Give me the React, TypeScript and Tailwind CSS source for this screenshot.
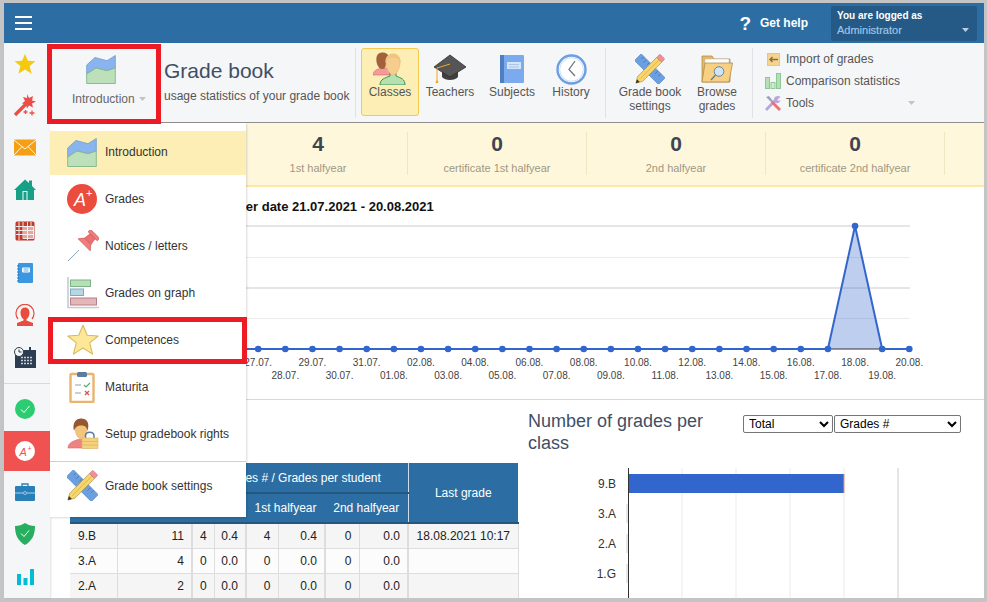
import React from "react";

const Star = ({ s, f, st }: { s: number; f: string; st?: string }) => (
  <svg width={s} height={s} viewBox="0 0 24 24">
    <polygon points="12,1 15.2,8.4 23.4,9 17,14.2 19.2,22.6 12,18 4.8,22.6 7,14.2 0.6,9 8.8,8.4" fill={f} stroke={st || "none"} strokeWidth={st ? 0.8 : 0} strokeLinejoin="round" />
  </svg>
);
const AreaIcon = () => (
  <svg width="30" height="30" viewBox="0 0 30 30">
    <path d="M0.7 19V10L9 2.5L21 5.7L29.3 .5V13L21 15.7L10 13Z" fill="#8ab4ee" stroke="#6f9bd1" strokeWidth=".8" />
    <path d="M.7 19L10 13L21 15.7L29.3 13V28.5H.7Z" fill="#bde0bb" stroke="#7fb58a" strokeWidth=".9" />
  </svg>
);
const Wand = () => (
  <svg width="24" height="24" viewBox="0 0 24 24">
    <path d="M2 22L13 11" stroke="#ee4d46" strokeWidth="3.4" />
    <path d="M14 1l2 4 4-2-1 4.500 4 1-4 2 1 4-4-2-2 3-1-4-4-1 3-2.500-2-4 4 1z" fill="#ee4d46" />
    <path d="M12.500 17v4M10.500 19h4M19 17.500v5M16.500 20h5" stroke="#ee4d46" strokeWidth="1.300" />
  </svg>
);
const Mail = () => (
  <svg width="22" height="17" viewBox="0 0 22 17">
    <rect width="22" height="16" y=".5" fill="#f59f14" />
    <path d="M0 1L11 10L22 1M0 16L8 7.500M22 16L14 7.500" stroke="#fff" strokeWidth=".9" fill="none" />
  </svg>
);
const Home = () => (
  <svg width="22" height="21" viewBox="0 0 22 21">
    <path d="M11 .5L15 4V1.500h3V7l4 4h-2v10H2V11H0Z" fill="#16a085" />
    <rect x="8.500" y="12" width="5" height="9" fill="#f5f6f8" />
    <rect x="9.500" y="13" width="3" height="8" fill="#16a085" />
  </svg>
);
const Calendar = () => (
  <svg width="20" height="20" viewBox="0 0 20 20">
    <rect width="19" height="19" x=".5" y=".5" rx="1.500" fill="#c0392b" />
    <rect x="8.500" y="6" width="10" height="11" fill="#f2d6d2" opacity=".7" />
    <path d="M8 5.500H18.500V17.500H8ZM4 1V19M8 1V5M12.500 1V19M16 1V5M1 5.500H19M1 9.500H19M1 13.500H19" stroke="#f5f6f8" strokeWidth=".9" fill="none" />
  </svg>
);
const Note = () => (
  <svg width="16" height="20" viewBox="0 0 16 20">
    <rect width="15" height="20" x="1" rx="1" fill="#3a97e0" />
    <path d="M0 3h2M0 6h2M0 9h2M0 12h2M0 15h2M0 18h2" stroke="#1f6fb5" strokeWidth="1" />
    <rect x="5" y="4.500" width="8" height="5" rx="1" fill="#fff" />
    <path d="M6.500 6h5M6.500 8h5" stroke="#3a97e0" strokeWidth=".8" />
  </svg>
);
const Person = () => (
  <svg width="22" height="22" viewBox="0 0 22 22">
    <path d="M4 15A9 9 0 1 1 18 15" fill="none" stroke="#e74c3c" strokeWidth="1.200" />
    <path d="M11 3.500c3 0 4.500 2 4.500 5s-1.500 6-3 6.500v1.500l6.500 2.500v3H3v-3l6.500-2.500V15c-1.500-.5-3-3.500-3-6.500s1.500-5 4.500-5Z" fill="#e74c3c" />
  </svg>
);
const ClockCal = () => (
  <svg width="22" height="21" viewBox="0 0 22 21">
    <rect x="1" y="3" width="21" height="18" fill="#2c3e50" />
    <rect x="15" y="0" width="2" height="5" fill="#2c3e50" />
    <path d="M7 10.500h12M7 13.500h12M7 16.500h12" stroke="#c7ced6" strokeWidth="1.500" strokeDasharray="2 1" />
    <circle cx="5" cy="5" r="4.500" fill="#f5f6f8" stroke="#2c3e50" />
    <path d="M5 2.500V5H7.500" stroke="#2c3e50" fill="none" />
  </svg>
);
const Check = () => (
  <svg width="20" height="20" viewBox="0 0 20 20">
    <circle cx="10" cy="10" r="10" fill="#2ecc71" />
    <path d="M6 10.500L9 13.500L14.500 7" stroke="#fff" strokeWidth="1" fill="none" />
  </svg>
);
const APlusSmall = () => (
  <svg width="20" height="20" viewBox="0 0 20 20">
    <circle cx="10" cy="10" r="10" fill="#fff" />
    <text x="4.500" y="15" fontSize="11" fontStyle="italic" fontFamily="'Liberation Sans', sans-serif" fill="#f05252">A</text>
    <text x="12.500" y="9.500" fontSize="7" fill="#f05252" fontFamily="'Liberation Sans', sans-serif">+</text>
  </svg>
);
const Case = () => (
  <svg width="20" height="18" viewBox="0 0 20 18">
    <path d="M7 3V1h6v2" stroke="#2980b9" fill="none" strokeWidth="1.300" />
    <rect y="3" width="20" height="15" rx="1" fill="#2980b9" />
    <path d="M0 10H20" stroke="#a9cfe8" strokeWidth="1" />
    <circle cx="10" cy="10" r="1.500" fill="#2980b9" stroke="#a9cfe8" strokeWidth=".8" />
  </svg>
);
const Shield = () => (
  <svg width="20" height="22" viewBox="0 0 20 22">
    <path d="M10 0C13 2 16 3 20 3C20 12 17 18 10 22C3 18 0 12 0 3C4 3 7 2 10 0Z" fill="#27ae60" />
    <path d="M6 10.500L9 13.500L14 7.500" stroke="#fff" strokeWidth="1" fill="none" />
  </svg>
);
const Bars = () => (
  <svg width="17" height="17" viewBox="0 0 17 17">
    <path d="M0 6h4v11H0zM6.500 10h4v7h-4zM13 1h4v16h-4z" fill="#00bcd4" />
  </svg>
);
const APlus = () => (
  <svg width="30" height="30" viewBox="0 0 30 30">
    <circle cx="15" cy="15" r="15" fill="#ea4c3e" />
    <text x="7" y="22" fontSize="18" fontStyle="italic" fontFamily="'Liberation Sans', sans-serif" fill="#fff">A</text>
    <text x="19" y="13" fontSize="11" fill="#fff" fontFamily="'Liberation Sans', sans-serif">+</text>
  </svg>
);
const Pin = () => (
  <svg width="32" height="32" viewBox="0 0 32 32">
    <path d="M1 31L12 20" stroke="#7f9bb8" strokeWidth=".9" />
    <g transform="translate(20 12) rotate(45)">
      <rect x="-6.500" y="-11.500" width="13" height="3.500" rx="1" fill="#f07c7c" stroke="#c95a5a" strokeWidth=".7" />
      <path d="M-3.500 -8H3.500L4.500 -1H-4.500Z" fill="#ee6f70" stroke="#c95a5a" strokeWidth=".7" />
      <path d="M-8.500 4L-4.500 -1H4.500L8.500 4Z" fill="#f07c7c" stroke="#c95a5a" strokeWidth=".7" />
    </g>
  </svg>
);
const GraphIcon = () => (
  <svg width="32" height="32" viewBox="0 0 32 32">
    <path d="M1 0V30.500H32" stroke="#c5cbd4" strokeWidth="1.600" fill="none" />
    <rect x="3.500" y="3" width="20" height="6.500" fill="#b6dfb3" stroke="#7cb28a" />
    <rect x="3.500" y="12" width="13" height="6.500" fill="#b8d6e3" stroke="#7fa9be" />
    <rect x="3.500" y="21" width="26" height="7" fill="#e3b7ba" stroke="#b87f85" />
  </svg>
);
const Clip = () => (
  <svg width="30" height="32" viewBox="0 0 30 32">
    <rect x="3.500" y="3" width="23" height="28" rx="1" fill="#fff" stroke="#eab36e" strokeWidth="2.400" />
    <rect x="10" y="1" width="10" height="5" rx="1.500" fill="#5b7c9e" />
    <circle cx="15" cy="2.500" r="1.500" fill="#5b7c9e" />
    <path d="M8 14h6M8 22h6" stroke="#8fa2b5" strokeWidth="1.200" />
    <path d="M17 14l2 2 4-4" stroke="#4caf6a" strokeWidth="1.200" fill="none" />
    <path d="M18 20l4 4M22 20l-4 4" stroke="#d9534f" strokeWidth="1.300" />
  </svg>
);
const Rights = () => (
  <svg width="32" height="32" viewBox="0 0 32 32">
    <path d="M1 30C1 25 6 23 11 21.500H17C21 23 23 25 24 30Z" fill="#ef8383" stroke="#d86a6a" strokeWidth=".6" />
    <path d="M8 9C8 3 20 3 20 9C20 16 17 21 14 21C11 21 8 16 8 9Z" fill="#f3c47c" stroke="#d9a55f" strokeWidth=".5" />
    <path d="M7 13C5 5 9 .5 14 .5C20 .5 23 5 20.500 13C20 9 18 7.500 14 7.500C11 7.500 8 9 7 13Z" fill="#95572f" />
    <path d="M18.500 20V18C18.500 13 27 13 27 18V20" stroke="#5b7c9e" strokeWidth="1.500" fill="none" />
    <rect x="15" y="20" width="16" height="10.500" fill="#f6d27e" stroke="#d9b875" strokeWidth=".7" />
    <path d="M15 23.500H31M15 27H31" stroke="#e0b55c" strokeWidth=".8" />
  </svg>
);
const RulerPencil = ({ s = 30 }: { s?: number }) => (
  <svg width={s} height={s} viewBox="0 0 30 30">
    <g transform="rotate(45 15 15)">
      <rect x="-2" y="10.500" width="34" height="9.500" fill="#6b9fe0" stroke="#4d7fc0" strokeWidth=".6" />
      <path d="M2 11v3M6 11v4M10 11v3M14 11v4M18 11v3M22 11v4M26 11v3" stroke="#3f6faf" strokeWidth=".7" />
    </g>
    <g transform="rotate(-45 15 15)">
      <path d="M-5 15L1 11.500H28V18.500H1Z" fill="#f7d56d" stroke="#a58a45" strokeWidth=".6" />
      <path d="M-5 15L-1.500 13V17Z" fill="#333" />
      <rect x="28" y="11.500" width="4.500" height="7" rx="1" fill="#ef8f97" stroke="#c06a70" strokeWidth=".5" />
      <path d="M1 15H28" stroke="#dcb040" strokeWidth=".7" />
    </g>
  </svg>
);
const People = () => (
  <svg width="34" height="33" viewBox="0 0 34 33">
    <path d="M0 22C1 18 5 17 8 16H13L17 18V23H0Z" fill="#f49a9a" stroke="#d56a6a" strokeWidth=".6" />
    <path d="M4 12C2 4 5 .5 9 .5C13 .5 16 2 16 7C14 7 13 9 13 12C13 15 11 17 9.500 17C7 17 5 15 4 12Z" fill="#a2613a" />
    <path d="M7 33C7 27 12 26 17 24V21H23V24C28 26 32 27 32 33Z" fill="#b5e0b0" stroke="#2f8a43" strokeWidth=".9" />
    <path d="M13 10C13 5 17 3 20 3C24 3 27 5 27 10C27 17 23 23 20 23C17 23 13 17 13 10Z" fill="#f7cd8f" stroke="#e5b877" strokeWidth=".7" />
    <path d="M12.500 11C12 4 16 1.500 20 1.500C24 1.500 28 4 27.500 11C26 7 24 6 20 6C16 6 14 7 12.500 11Z" fill="#efc67e" />
  </svg>
);
const Cap = () => (
  <svg width="34" height="30" viewBox="0 0 34 30">
    <path d="M9 13V23C12 27 22 27 25 23V13Z" fill="#3f3f3f" />
    <path d="M17 1L33 13L17 23L1 13Z" fill="#555" stroke="#2e2e2e" strokeWidth=".8" />
    <path d="M4 14L17 10" stroke="#f5a623" strokeWidth="1" />
    <path d="M4 14V25" stroke="#f5a623" strokeWidth="1" />
    <path d="M4 24L2.500 29H5.500Z" fill="#f5a623" />
  </svg>
);
const Book = () => (
  <svg width="24" height="28" viewBox="0 0 24 28">
    <rect width="24" height="28" rx="1" fill="#7babee" />
    <rect width="4" height="28" fill="#4f7fc0" />
    <rect x="7" y="7" width="14" height="7" fill="#d6e4f7" />
    <path d="M9 9.500h10M9 12h10" stroke="#9bbbe5" strokeWidth=".8" />
  </svg>
);
const ClockIcon = () => (
  <svg width="31" height="31" viewBox="0 0 31 31">
    <circle cx="15.500" cy="15.500" r="14" fill="#fff" stroke="#6b9ee2" strokeWidth="2.400" />
    <circle cx="15.500" cy="15.500" r="11.800" fill="none" stroke="#cfe0f5" strokeWidth="1" />
    <path d="M19 7L13 15.500L19 22" stroke="#6b7784" strokeWidth="1.300" fill="none" />
  </svg>
);
const Folder = () => (
  <svg width="32" height="28" viewBox="0 0 32 28">
    <path d="M1 27V1H11L13 4H29V27Z" fill="#e6b868" stroke="#a8843f" strokeWidth=".7" />
    <rect x="4" y="4" width="24" height="6" fill="#fff" stroke="#b9b9b9" strokeWidth=".5" />
    <path d="M1 27L4 8H31.500L28 27Z" fill="#f8d083" stroke="#a8843f" strokeWidth=".7" />
    <circle cx="18" cy="16.500" r="4.800" fill="#cfe4f4" stroke="#5b7c9e" strokeWidth=".9" />
    <path d="M14.500 20L10 25" stroke="#5b7c9e" strokeWidth="1.300" />
  </svg>
);
const ImportIcon = () => (
  <svg width="13" height="13" viewBox="0 0 13 13">
    <rect x=".5" y=".5" width="12" height="12" fill="#f6d490" stroke="#e5c68a" />
    <path d="M3 6.500H11M5.500 4L3 6.500L5.500 9" stroke="#8a6d3b" strokeWidth="1.400" fill="none" />
  </svg>
);
const CompareIcon = () => (
  <svg width="16" height="16" viewBox="0 0 16 16">
    <rect x=".5" y="4.500" width="4" height="11" fill="#b6dfb3" stroke="#8fc79a" />
    <rect x="6" y="9.500" width="4" height="6" fill="#cfeacd" stroke="#8fc79a" />
    <rect x="11.500" y=".5" width="4" height="15" fill="#b6dfb3" stroke="#8fc79a" />
  </svg>
);
const ToolsIcon = () => (
  <svg width="16" height="16" viewBox="0 0 16 16">
    <path d="M1 15L11 4.500" stroke="#b8a7dc" strokeWidth="2.800" />
    <path d="M9 3.500C10.500 .5 14 .5 15.500 2L12.500 4.500L13 6L15.500 5C15 8 12 9 10 7.500Z" fill="#b8a7dc" />
    <path d="M1 2L4 1L8 6L6.500 7.500Z" fill="#9aa5b8" />
    <path d="M7 7L15 15" stroke="#ef6f6f" strokeWidth="2.800" />
  </svg>
);
const Caret = ({ c = "#c4c4c4" }: { c?: string }) => (
  <svg width="7" height="4" viewBox="0 0 7 4"><path d="M0 0H7L3.500 4Z" fill={c} /></svg>
);

const sideA = [<Star key="s" s={22} f="#f5c90f" />, <Wand key="w" />, <Mail key="m" />, <Home key="h" />, <Calendar key="c" />, <Note key="n" />, <Person key="p" />, <ClockCal key="k" />];

const menu = [
  { t: "Grades", i: <APlus /> },
  { t: "Notices / letters", i: <Pin /> },
  { t: "Grades on graph", i: <GraphIcon /> },
  { t: "Competences", i: <Star s={32} f="#fde89a" st="#d9b75e" /> },
  { t: "Maturita", i: <Clip /> },
  { t: "Setup gradebook rights", i: <Rights /> },
];

const dates = [
  "21.07.", "22.07.", "23.07.", "24.07.", "25.07.", "26.07.", "27.07.", "28.07.", "29.07.", "30.07.", "31.07.",
  "01.08.", "02.08.", "03.08.", "04.08.", "05.08.", "06.08.", "07.08.", "08.08.", "09.08.", "10.08.", "11.08.",
  "12.08.", "13.08.", "14.08.", "15.08.", "16.08.", "17.08.", "18.08.", "19.08.", "20.08.",
];
const px = (i: number) => 45.4 + 27.13 * i;
const base = 135;
const py = (i: number) => (i === 28 ? 12 : base);

const rows = [
  ["9.B", "11", "4", "0.4", "4", "0.4", "0", "0.0", "18.08.2021 10:17"],
  ["3.A", "4", "0", "0.0", "0", "0.0", "0", "0.0", ""],
  ["2.A", "2", "0", "0.0", "0", "0.0", "0", "0.0", ""],
];
const classBars = ["9.B", "3.A", "2.A", "1.G"];

function ToolBtn({ label, w, icon }: { label: React.ReactNode; w: string; icon: React.ReactNode }) {
  return (
    <div className={`${w} flex flex-col items-center pt-[10px] text-center text-[12px] leading-[14px] text-[#555]`}>
      <div className="flex h-[32px] items-center justify-center">{icon}</div>
      <div>{label}</div>
    </div>
  );
}

export default function App() {
  return (
    <div className="relative h-[602px] w-[987px] overflow-hidden bg-[#c4c4c4] pb-[4px] pl-[4px] pr-[3px] pt-[3px] font-['Liberation_Sans',Arial,sans-serif]">
      <div className="flex h-full flex-col bg-white">
        {/* top bar */}
        <header className="flex h-[40px] shrink-0 items-center bg-[#2c6ea3] text-white">
          <div className="ml-[11px] flex w-[17px] flex-col gap-[4px]">
            <span className="h-[2px] bg-white" />
            <span className="h-[2px] bg-white" />
            <span className="h-[2px] bg-white" />
          </div>
          <span className="ml-auto text-[19px] font-bold leading-none">?</span>
          <span className="ml-[9px] text-[12px] font-bold">Get help</span>
          <div className="ml-[23px] mr-[7px] flex h-[35px] w-[146px] flex-col justify-center rounded-[2px] bg-[#245a85] pl-[6px]">
            <span className="text-[10px] font-bold leading-[14px]">You are logged as</span>
            <div className="flex items-center justify-between pr-[8px]">
              <span className="text-[11px] leading-[15px] text-[#9cc4ea] [-webkit-text-stroke:0.2px_#9cc4ea]">Administrator</span>
              <Caret c="#b9cfe3" />
            </div>
          </div>
        </header>

        <div className="flex min-h-0 flex-1">
          {/* sidebar */}
          <aside className="z-10 flex w-[46px] shrink-0 flex-col bg-[#f5f6f8] shadow-[1px_0_2px_rgba(0,0,0,0.12)]">
            {sideA.map((ic, i) => (
              <div key={i} className={`${i === 0 ? "h-[41px]" : "h-[42px]"} flex items-center justify-center pr-[4px]`}>{ic}</div>
            ))}
            <div className="mt-[5px] h-px bg-[#d9d9d9]" />
            <div className="mt-[4px] flex h-[42px] items-center justify-center pr-[4px]"><Check /></div>
            <div className="mt-px flex h-[40px] items-center justify-center bg-[#f05252] pr-[4px]"><APlusSmall /></div>
            <div className="flex h-[42px] items-center justify-center pr-[4px]"><Case /></div>
            <div className="flex h-[42px] items-center justify-center pr-[4px]"><Shield /></div>
            <div className="flex h-[42px] items-center justify-center pr-[4px]"><Bars /></div>
          </aside>

          <main className="relative flex min-w-0 flex-1 flex-col">
            {/* toolbar */}
            <div className="flex h-[80px] shrink-0 border-b border-[#8f8f8f] bg-[#f5f6f8]">
              <div className="flex w-[110px] flex-col items-start pt-[12px] text-[12px] text-[#666]">
                <div className="ml-[36px]"><AreaIcon /></div>
                <div className="ml-[22px] mt-[7px] flex items-center gap-[4px] leading-[14px]">Introduction <Caret /></div>
              </div>
              <div className="w-[195px] pl-[4px] pt-[15px]">
                <div className="text-[21px] leading-[26px] text-[#3f4f66]">Grade book</div>
                <div className="mt-[5px] text-[12px] leading-[14px] text-[#555]">usage statistics of your grade book</div>
              </div>
              <div className="my-[5px] h-[70px] w-px bg-[#dfe1e5]" />
              <div className="ml-[5px] mt-[5px] flex h-[68px] w-[58px] flex-col items-center rounded-[3px] border border-[#f5c94f] bg-[#fdeeb5] pt-[3px] text-[12px] leading-[14px] text-[#555]">
                <div className="flex h-[33px] items-center"><People /></div>
                <div>Classes</div>
              </div>
              <ToolBtn w="w-[62px]" label="Teachers" icon={<Cap />} />
              <ToolBtn w="w-[62px]" label="Subjects" icon={<Book />} />
              <ToolBtn w="w-[56px]" label="History" icon={<ClockIcon />} />
              <div className="my-[5px] ml-[6px] h-[70px] w-px bg-[#dfe1e5]" />
              <ToolBtn w="w-[88px]" label={<>Grade book<br />settings</>} icon={<RulerPencil />} />
              <ToolBtn w="w-[46px]" label={<>Browse<br />grades</>} icon={<Folder />} />
              <div className="my-[5px] ml-[12px] h-[70px] w-px bg-[#dfe1e5]" />
              <div className="ml-[12px] w-[150px] pt-[5px] text-[12px] text-[#555]">
                <div className="flex h-[22px] items-center"><span className="ml-[2px] flex w-[19px]"><ImportIcon /></span>Import of grades</div>
                <div className="flex h-[22px] items-center"><span className="flex w-[21px]"><CompareIcon /></span>Comparison statistics</div>
                <div className="flex h-[22px] items-center"><span className="flex w-[21px]"><ToolsIcon /></span>Tools<span className="ml-auto"><Caret /></span></div>
              </div>
            </div>

            {/* stats */}
            <div className="flex h-[64px] shrink-0 items-start border-b-2 border-[#fbe8a6] bg-[#fef7dc] pt-[9px]">
              <div className="w-[179px]" />
              {[["4", "1st halfyear"], ["0", "certificate 1st halfyear"], ["0", "2nd halfyear"], ["0", "certificate 2nd halfyear"]].map(([n, l], i) => (
                <div key={i} className="flex h-[43px] w-[179px] flex-col items-center border-r border-[#f0e6bf]">
                  <div className="text-[21px] font-bold leading-[24px] text-[#3e4450]">{n}</div>
                  <div className="mt-[6px] text-[11px] leading-[13px] text-[#a09882]">{l}</div>
                </div>
              ))}
            </div>

            {/* line chart */}
            <section className="h-[213px] shrink-0 border-b border-[#d8d8d8]">
              <div className="pl-[73px] pt-[13px] text-[13px] font-bold leading-[14px] text-[#111]">Number of grades per date 21.07.2021 - 20.08.2021</div>
              <svg width="934" height="184" viewBox="0 0 934 184" fontFamily="'Liberation Sans', Arial, sans-serif">
                {[12, 43.500, 74, 104.500].map((y, i) => (
                  <line key={y} x1="0" x2="860" y1={y} y2={y} stroke={i % 2 ? "#ebebeb" : "#cccccc"} />
                ))}
                <polygon points={`${px(27)},${base} ${px(28)},12 ${px(29)},${base}`} fill="#3366cc" opacity=".32" />
                <line x1={px(27)} x2={px(29)} y1={base} y2={base} stroke="#333" />
                <polyline points={dates.map((_, i) => `${px(i)},${py(i)}`).join(" ")} fill="none" stroke="#3366cc" strokeWidth="2" />
                {dates.map((d, i) => (
                  <g key={d}>
                    <circle cx={px(i)} cy={py(i)} r="3.300" fill="#3366cc" />
                    <text x={px(i)} y={i % 2 === 0 ? 152 : 165} textAnchor="middle" fontSize="10" fill="#444">{d}</text>
                  </g>
                ))}
              </svg>
            </section>

            {/* lower */}
            <section className="flex min-h-0 flex-1 overflow-hidden">
              <div className="w-[478px] shrink-0 pl-[20px] pt-[63px]">
                <table className="w-[448px] table-fixed border-collapse text-[12px] text-[#222]">
                  <colgroup>
                    {[47, 75, 22, 32, 32, 47, 34, 49, 110].map((w, i) => <col key={i} style={{ width: w }} />)}
                  </colgroup>
                  <thead className="bg-[#2c6ea3] text-white">
                    <tr className="h-[30px]">
                      <th rowSpan={2} className="border-b-2 border-[#22577f] font-normal">Class</th>
                      <th rowSpan={2} className="border-b-2 border-[#22577f] font-normal">Students</th>
                      <th colSpan={6} className="border-b-2 border-[#22577f] font-normal">Grades # / Grades per student</th>
                      <th rowSpan={2} className="border-b-2 border-l border-[#22577f] border-l-[#cfdbe6] font-normal">Last grade</th>
                    </tr>
                    <tr className="h-[30px]">
                      <th colSpan={2} className="border-b-2 border-[#22577f] font-normal">Total</th>
                      <th colSpan={2} className="border-b-2 border-[#22577f] font-normal">1st halfyear</th>
                      <th colSpan={2} className="border-b-2 border-[#22577f] font-normal">2nd halfyear</th>
                    </tr>
                  </thead>
                  <tbody>
                    {rows.map((r, ri) => (
                      <tr key={ri} className={`h-[25px] ${ri % 2 ? "bg-[#fcfcfc]" : "bg-[#f5f5f5]"}`}>
                        {r.map((c, ci) => (
                          <td
                            key={ci}
                            className={`border-b border-r border-[#dddddd] leading-[14px] ${
                              ci === 0 ? "pl-[8px] text-left" : ci === 8 ? "text-center" : ci === 2 ? "text-center" : "pr-[7px] text-right"
                            } ${ci === 1 || ci === 3 || ci === 5 || ci === 7 ? "border-r-2" : ""}`}
                          >
                            {c}
                          </td>
                        ))}
                      </tr>
                    ))}
                  </tbody>
                </table>
              </div>

              <div className="min-w-0 flex-1 pt-[10px]">
                <div className="flex items-start">
                  <h2 className="w-[215px] text-[18px] font-normal leading-[22px] text-[#3f4f66]">Number of grades per class</h2>
                  <select className="mt-[5px] h-[18px] w-[90px] rounded-[2px] border border-[#767676] bg-white pl-[1px] text-[12px] text-black" defaultValue="Total">
                    <option>Total</option>
                  </select>
                  <select className="ml-px mt-[5px] h-[18px] w-[127px] rounded-[2px] border border-[#767676] bg-white pl-[1px] text-[12px] text-black" defaultValue="Grades #">
                    <option>Grades #</option>
                  </select>
                </div>
                <svg width="456" height="134" viewBox="0 0 456 134" className="mt-[12px]" fontFamily="'Liberation Sans', Arial, sans-serif">
                  {[154, 208, 262, 316].map((x) => <line key={x} x1={x} x2={x} y1="2" y2="134" stroke="#ebebeb" />)}
                  <line x1="370" x2="370" y1="2" y2="134" stroke="#cccccc" />
                  <rect x="100" y="8" width="216" height="19" fill="#3366cc" />
                  <rect x="315.500" y="8" width="1" height="19" fill="#e8927c" />
                  {classBars.map((c, i) => (
                    <text key={c} x="88" y={21.500 + i * 30} textAnchor="end" fontSize="12" fill="#333">{c}</text>
                  ))}
                  {[1, 2, 3].map((i) => <line key={i} x1="99" x2="99" y1={8 + i * 30} y2={27 + i * 30} stroke="#d0d0d0" />)}
                  <line x1="100.500" x2="100.500" y1="2" y2="134" stroke="#333" />
                </svg>
              </div>
            </section>

            {/* open menu */}
            <div className="absolute left-0 top-[80px] z-20 w-[196px] bg-white pb-[8px] pt-[8px] text-[12px] text-[#333] shadow-[1px_1px_2px_rgba(0,0,0,0.15)]">
              <div className="flex h-[44px] items-center bg-[#fdeeb5] pl-[17px]">
                <span className="flex w-[38px]"><AreaIcon /></span><span className="mb-[2px]">Introduction</span>
              </div>
              {menu.map((m) => (
                <div key={m.t} className="flex h-[47px] items-center pl-[17px]">
                  <span className="flex w-[38px]">{m.i}</span>{m.t}
                </div>
              ))}
              <div className="mt-[4px] h-px bg-[#d0d0d0]" />
              <div className="flex h-[47px] items-center pl-[17px]">
                <span className="flex w-[38px]"><RulerPencil s={31} /></span>Grade book settings
              </div>
            </div>
          </main>
        </div>
      </div>

      {/* red annotations */}
      <div className="absolute left-[47px] top-[44px] z-30 h-[80px] w-[114px] border-[5px] border-[#ed1c24]" />
      <div className="absolute left-[48px] top-[317px] z-30 h-[47px] w-[199px] border-[5px] border-[#ed1c24]" />
    </div>
  );
}
